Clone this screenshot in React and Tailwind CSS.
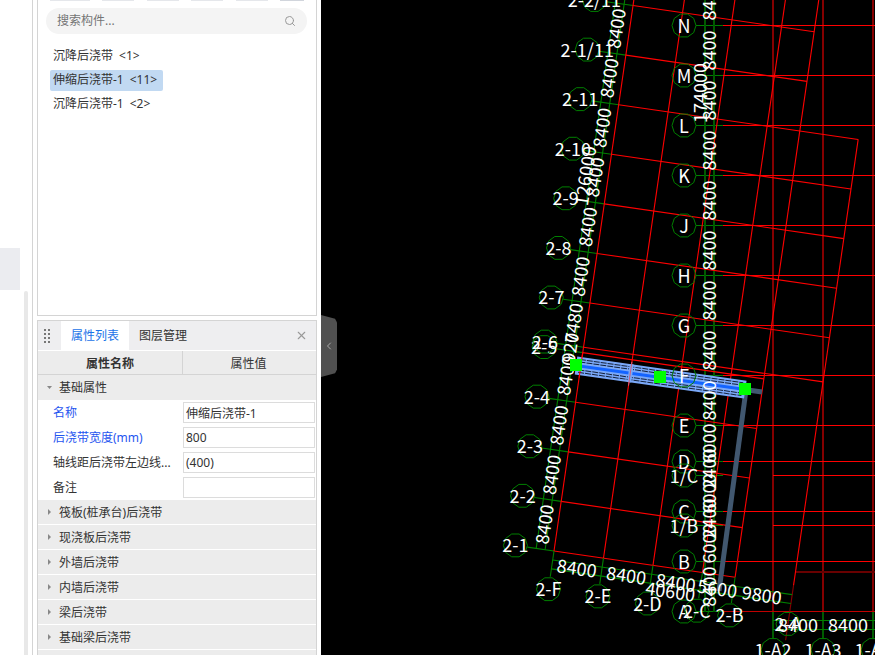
import { Search, X, ChevronLeft } from 'lucide-react';

// The rotated axis grid hangs off one corner; s runs along 2-1, t runs along 2-F.
const OX = 554;
const OY = 551;
const COS = 0.9897;
const SIN = 0.1434;
const T_SCALE = 1.002;
const at = (s, t) => [OX + s * COS + t * T_SCALE * SIN, OY + s * SIN - t * T_SCALE * COS];

const RED = '#ff0000';
const DARK_RED = '#850000';
const GREEN = '#008000';

const rows = [
  { name: '2-1', t: 0, end: 183 },
  { name: '2-2', t: 50, end: 183 },
  { name: '2-3', t: 100, end: 183 },
  { name: '2-4', t: 150, end: 183 },
  { name: '2-5', t: 200, end: 183 },
  { name: '2-6', t: 205.5, end: 242 },
  { name: '2-7', t: 250, end: 242 },
  { name: '2-8', t: 300, end: 242 },
  { name: '2-9', t: 350, end: 242 },
  { name: '2-10', t: 400, end: 242 },
  { name: '2-11', t: 450, end: 242 },
  { name: '2-1/11', t: 500, end: 183 },
  { name: '2-2/11', t: 550, end: 183 },
];

const cols = [
  { name: '2-F', s: 0, top: 620 },
  { name: '2-E', s: 50, top: 620 },
  { name: '2-D', s: 100, top: 620 },
  { name: '2-C', s: 150, top: 620 },
  { name: '2-B', s: 183, top: 620 },
  { name: '2-A', s: 242, top: 450 },
];

const rowDims = [
  ['8400', 25], ['8400', 75], ['8400', 125], ['8400', 175], ['920', 203], ['7480', 228], ['8400', 275],
  ['8400', 325], ['8400', 375], ['8400', 425], ['8400', 475], ['8400', 525], ['8400', 575],
];
const colDims = [['8400', 25], ['8400', 75], ['8400', 125], ['5600', 167], ['9800', 212]];

const axes = [
  ['N', 25], ['M', 75], ['L', 125], ['K', 175], ['J', 225], ['H', 275], ['G', 325], ['F', 375],
  ['E', 425], ['D', 461], ['1/C', 475], ['C', 511], ['1/B', 525], ['B', 561], ['A', 611],
];
const axisDims = [
  ['8400', 0], ['8400', 50], ['8400', 100], ['8400', 150], ['8400', 200], ['8400', 250], ['8400', 300],
  ['8400', 350], ['8400', 400], ['6000', 443], ['2400', 468], ['6000', 493], ['2400', 518], ['6000', 543], ['8400', 586],
];
const bottomAxes = [['1-A2', 773], ['1-A3', 823], ['1-A4', 873]];

function Line({ from, to, color, width = 1 }) {
  return <line x1={from[0]} y1={from[1]} x2={to[0]} y2={to[1]} stroke={color} strokeWidth={width} />;
}

function Label({ x, y, rotate = 0, children }) {
  return (
    <text x={x} y={y} dy="7" textAnchor="middle" fill="#fff" transform={`rotate(${rotate} ${x} ${y})`}>
      {children}
    </text>
  );
}

function Bubble({ x, y, name }) {
  const points = Array.from({ length: 10 }, (_, i) => {
    const a = (i * Math.PI) / 5;
    return `${(x + 12 * Math.cos(a)).toFixed(1)},${(y + 12 * Math.sin(a)).toFixed(1)}`;
  }).join(' ');
  return (
    <g>
      <polygon points={points} fill="none" stroke={GREEN} />
      <Label x={x} y={y}>{name}</Label>
    </g>
  );
}

function Drawing() {
  return (
    <svg
      viewBox="321 0 554 655"
      preserveAspectRatio="xMinYMin slice"
      className="block h-full w-full text-[18px] font-['Noto_Sans_CJK_SC',sans-serif]"
    >
      {/* straight grid */}
      {bottomAxes.map(([name, x]) => (
        <g key={name}>
          <Line from={[x, 0]} to={[x, 612]} color={DARK_RED} width={2} />
          <Line from={[x, 612]} to={[x, 638]} color="#005a00" width={2} />
        </g>
      ))}
      <Line from={[796, 572]} to={[890, 572]} color="#680000" width={2} />
      <Line from={[773, 620.5]} to={[890, 620.5]} color={GREEN} />
      <Line from={[773, 629.5]} to={[890, 629.5]} color={GREEN} />
      {axes.map(([name, y]) => (
        <g key={name}>
          <Line from={[696, y + 0.5]} to={[723, y + 0.5]} color={GREEN} />
          <Line from={[name.startsWith('1/') ? 773 : 723, y + 0.5]} to={[890, y + 0.5]} color={name === 'A' ? '#c00000' : RED} />
        </g>
      ))}
      <Line from={[705, 0]} to={[705, 612]} color="#005a00" width={2} />
      <Line from={[714, 0]} to={[714, 612]} color="#005a00" width={2} />

      {/* rotated grid */}
      {rows.map((r) => (
        <g key={r.name}>
          <Line from={at(0, r.t)} to={at(r.end, r.t)} color={RED} width={1.1} />
          <Line from={at(-27, r.t)} to={at(0, r.t)} color={GREEN} width={1.1} />
        </g>
      ))}
      {cols.map((c) => (
        <g key={c.name}>
          <Line from={at(c.s, 0)} to={at(c.s, c.top)} color={RED} width={1.1} />
          <Line from={at(c.s, c.name === '2-A' ? -55 : -26)} to={at(c.s, 0)} color={c.name === '2-A' ? DARK_RED : GREEN} width={1.1} />
        </g>
      ))}
      <Line from={at(-9, 0)} to={at(-9, 620)} color={GREEN} width={1.1} />
      <Line from={at(-18, 0)} to={at(-18, 620)} color={GREEN} width={1.1} />
      <Line from={at(0, -9)} to={at(242, -9)} color={GREEN} width={1.1} />
      <Line from={at(0, -18)} to={at(242, -18)} color={GREEN} width={1.1} />

      {/* settlement strips */}
      <Line from={[746, 390]} to={[719, 591]} color="#41576f" width={5} />
      <Line from={[748, 390]} to={[762, 392]} color="#41576f" width={5} />
      <g transform="translate(576 365.5) rotate(8.1)">
        <rect x="0" y="-9" width="171" height="18" fill="#7aa8f8" />
        {[-6.5, -4, 4, 6.5].map((y) => (
          <line key={y} x1="3" x2="168" y1={y} y2={y} stroke="#16233c" strokeWidth="1" strokeDasharray="6 1" />
        ))}
        <line x1="0" x2="171" y1="0" y2="0" stroke="#1464ff" strokeWidth="3" />
        <rect x="53" y="-9" width="4" height="18" fill="#7aa8f8" />
      </g>
      <Line from={at(0, 175)} to={at(0, 200)} color={RED} width={1.1} />
      <Line from={at(50, 174)} to={at(50, 198)} color="#d0607c" />

      {/* bubbles and dimensions */}
      {axes.map(([name, y]) => <Bubble key={name} x={684} y={y + 0.5} name={name} />)}
      {bottomAxes.map(([name, x]) => <Bubble key={name} x={x} y={650} name={name} />)}
      {rows.map((r) => {
        const [x, y] = at(-39, r.t);
        return <Bubble key={r.name} x={x} y={y} name={r.name} />;
      })}
      {cols.map((c) => {
        const [x, y] = at(c.s, -38.5);
        return <Bubble key={c.name} x={x} y={y} name={c.name} />;
      })}
      {rowDims.map(([text, t]) => {
        const [x, y] = at(-13.5, t);
        return <Label key={t} x={x} y={y} rotate={-81.7}>{text}</Label>;
      })}
      {colDims.map(([text, s]) => {
        const [x, y] = at(s, -13.5);
        return <Label key={s} x={x} y={y} rotate={8.3}>{text}</Label>;
      })}
      {axisDims.map(([text, y]) => <Label key={y} x={709} y={y + 0.5} rotate={-90}>{text}</Label>)}
      <Label x={at(-23, 375)[0]} y={at(-23, 375)[1]} rotate={-81.7}>126000</Label>
      <Label x={at(121, -23)[0]} y={at(121, -23)[1]} rotate={8.3}>40600</Label>
      <Label x={700} y={93} rotate={-90}>174000</Label>
      <Label x={798} y={625}>8400</Label>
      <Label x={848} y={625}>8400</Label>

      {/* grips of the selected strip */}
      {[[576, 365], [660, 377], [745, 389]].map(([x, y]) => (
        <rect key={x} x={x - 6} y={y - 6} width="12" height="12" fill="#00ff00" />
      ))}
    </svg>
  );
}

const components = [
  { name: '沉降后浇带', count: '<1>' },
  { name: '伸缩后浇带-1', count: '<11>' },
  { name: '沉降后浇带-1', count: '<2>' },
];
const fields = [
  { id: 'name', label: '名称', value: '伸缩后浇带-1', key: true },
  { id: 'width', label: '后浇带宽度(mm)', value: '800', key: true },
  { id: 'offset', label: '轴线距后浇带左边线...', value: '(400)' },
  { id: 'note', label: '备注', value: '' },
];
const groups = ['筏板(桩承台)后浇带', '现浇板后浇带', '外墙后浇带', '内墙后浇带', '梁后浇带', '基础梁后浇带'];

function ComponentPanel() {
  return (
    <section className="h-[316px] shrink-0 border-x border-b border-[#d4d4d4]">
      <div className="flex h-px justify-between px-3">
        <span className="w-10 bg-gray-200" />
        <span className="w-8 bg-gray-200" />
        <span className="w-8 bg-gray-200" />
        <span className="w-8 bg-gray-200" />
        <span className="w-8 bg-gray-200" />
        <span className="w-6 bg-gray-300" />
      </div>
      <label className="ml-2 mr-[9px] mt-[7px] flex h-[26px] items-center rounded-full bg-[#f4f4f4] px-[11px]">
        <input type="search" placeholder="搜索构件..." aria-label="搜索构件" className="min-w-0 flex-1 bg-transparent outline-none placeholder:text-[#757575]" />
        <Search size={12} className="text-[#999]" />
      </label>
      <ul className="mt-[10px] px-3">
        {components.map((c, i) => (
          <li key={c.name} className="flex h-6 items-center">
            <button className={i === 1 ? 'flex h-[21px] items-center gap-1.5 rounded-xs bg-[#c1d9f2] pl-[3px] pr-[6px]' : 'flex h-[21px] items-center gap-1.5 px-[3px]'}>
              <span>{c.name}</span>
              <span>{c.count}</span>
            </button>
          </li>
        ))}
      </ul>
    </section>
  );
}

function PropertyPanel() {
  return (
    <section className="mt-1 flex-1 border-x border-t border-[#d4d4d4]">
      <div className="flex h-[29px] items-center bg-[#eeeef0]">
        <svg width="23" height="16" className="shrink-0" fill="#777">
          {[0, 1, 2, 3].map((i) => (
            <g key={i}>
              <rect x="6" y={i * 4 + 1} width="2" height="2" />
              <rect x="10" y={i * 4 + 1} width="2" height="2" />
            </g>
          ))}
        </svg>
        <button className="h-full w-[68px] bg-white text-[#1a73e8]">属性列表</button>
        <button className="h-full w-[68px]">图层管理</button>
        <button aria-label="关闭" className="ml-auto mr-2 text-[#999]"><X size={13} strokeWidth={2} /></button>
      </div>
      <div className="mt-px flex h-6 border-b border-[#d4d4d4] bg-[#ececec] text-center">
        <div className="flex w-[145px] items-center justify-center border-r border-[#d4d4d4] pt-0.5 font-bold">属性名称</div>
        <div className="flex flex-1 items-center justify-center pr-0.5 pt-0.5">属性值</div>
      </div>
      <button className="flex h-[25px] w-full items-center bg-[#ececec] pl-2">
        <svg width="13" height="6" fill="#888"><path d="M1 1h5l-2.500 3z" /></svg>
        基础属性
      </button>
      {fields.map((f) => (
        <div key={f.id} className="flex h-[25px] items-center">
          <label htmlFor={f.id} className={f.key ? 'w-[145px] whitespace-nowrap pl-[15px] text-[#1f55f0]' : 'w-[145px] whitespace-nowrap pl-[15px]'}>{f.label}</label>
          <input id={f.id} defaultValue={f.value} className="mr-px h-[21px] min-w-0 flex-1 border border-[#dcdcdc] px-0.5 outline-none" />
        </div>
      ))}
      {groups.map((g) => (
        <button key={g} className="flex h-[25px] w-full items-center border-b border-white bg-[#ececec] pl-2 pt-0.5">
          <svg width="13" height="8" fill="#888"><path d="M2 0l3 3l-3 3z" /></svg>
          {g}
        </button>
      ))}
      <div className="h-6 bg-[#ececec]" />
    </section>
  );
}

export default function App() {
  return (
    <div className="flex h-screen overflow-hidden bg-white text-[12px] leading-4 text-[#333] font-['Noto_Sans','Noto_Sans_CJK_SC',sans-serif]">
      <div className="flex w-[33px] shrink-0 border-r border-[#d4d4d4]">
        <div className="mt-[248px] h-[42px] w-5 bg-[#ebecf0]" />
        <div className="ml-1 mt-[291px] w-1 rounded-t bg-[#e8e8e8]" />
      </div>
      <div className="ml-1 flex w-[280px] shrink-0 flex-col">
        <ComponentPanel />
        <PropertyPanel />
      </div>
      <main className="relative ml-1 min-w-0 flex-1 bg-black">
        <Drawing />
        <button aria-label="收起" className="absolute left-0 top-[315px] flex h-[62px] w-4 items-center justify-center bg-[#505050] text-[#aaa] [clip-path:polygon(0_0,88%_6%,100%_12%,100%_88%,88%_94%,0_100%)]">
          <ChevronLeft size={12} />
        </button>
      </main>
    </div>
  );
}
